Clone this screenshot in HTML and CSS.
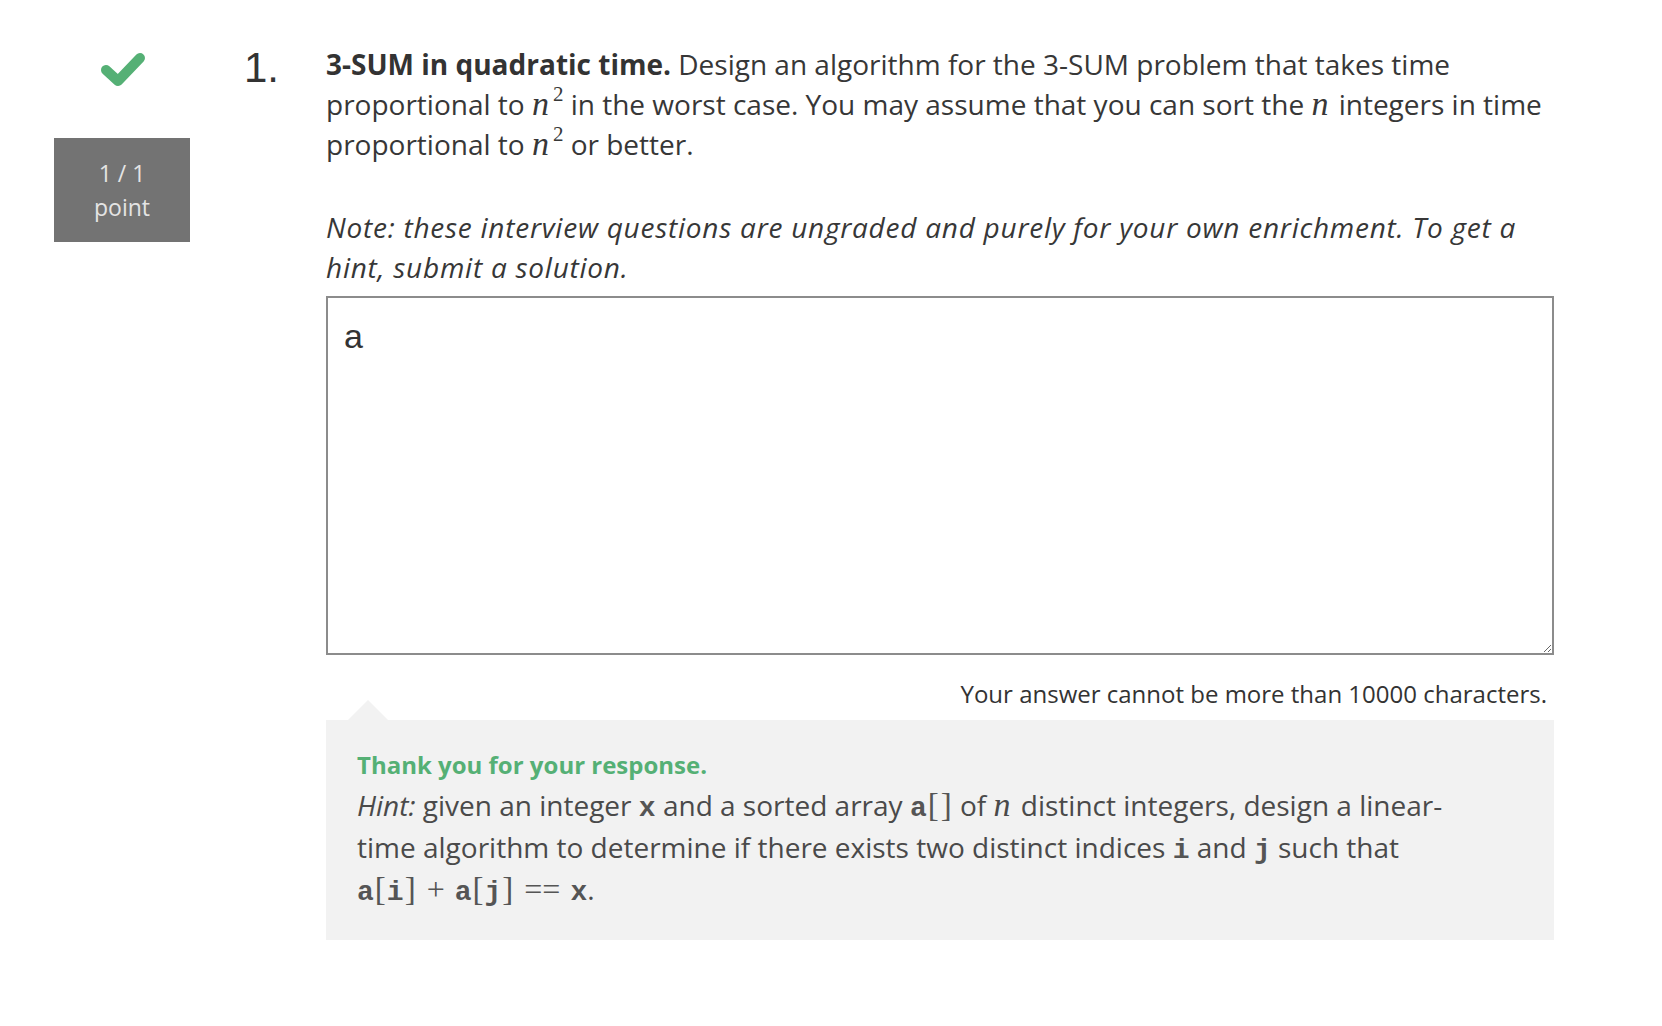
FILE: index.html
```html
<!DOCTYPE html>
<html lang="en">
<head>
<meta charset="utf-8">
<title>3-SUM in quadratic time</title>
<link rel="stylesheet" href="styles.css">
</head>
<body>
<div class="question">
  <div class="status">
    <svg class="check" viewBox="0 0 44 36" width="44" height="36" aria-hidden="true">
      <polyline points="5,19 17,30 39,7" fill="none" stroke="#55b075" stroke-width="10" stroke-linecap="round" stroke-linejoin="round"/>
    </svg>
    <div class="points">1 / 1<br>point</div>
  </div>
  <div class="qnum">1.</div>
  <div class="qbody">
    <p class="prompt"><strong>3-SUM in quadratic time.</strong> Design an algorithm for the 3-SUM problem that takes time proportional to <span class="math"><span class="mi">n</span><sup class="sup">2</sup></span> in the worst case. You may assume that you can sort the <span class="math"><span class="mi">n</span></span> integers in time proportional to <span class="math"><span class="mi">n</span><sup class="sup">2</sup></span> or better.</p>
    <p class="note">Note: these interview questions are ungraded and purely for your own enrichment. To get a hint, submit a solution.</p>
    <textarea class="answer">a</textarea>
    <div class="limit">Your answer cannot be more than 10000 characters.</div>
    <div class="feedback">
      <div class="fb-title">Thank you for your response.</div>
      <div class="fb-hint"><em>Hint:</em> given an integer <span class="tt">x</span> and a sorted array <span class="tt">a</span><span class="br">[</span><span class="br">]</span> of <span class="math"><span class="mi">n</span></span> distinct integers, design a linear-time algorithm to determine if there exists two distinct indices <span class="tt">i</span> and <span class="tt">j</span> such that <span class="tt">a</span><span class="br">[</span><span class="tt">i</span><span class="br">]</span><span class="op">+</span><span class="tt">a</span><span class="br">[</span><span class="tt">j</span><span class="br">]</span><span class="op">==</span><span class="tt">x</span>.</div>
    </div>
  </div>
</div>
</body>
</html>
```

FILE: styles.css
```css
html, body {
  margin: 0;
  padding: 0;
  background: #ffffff;
}

body {
  font-family: "Open Sans", "Noto Sans", sans-serif;
  color: #373737;
}

.question {
  display: flex;
  align-items: flex-start;
  padding: 44px 0 40px 54px;
}

.status {
  width: 136px;
  display: flex;
  flex-direction: column;
  align-items: center;
  margin-right: 54px;
  flex-shrink: 0;
}

.check {
  display: block;
  margin-top: 7px;
  margin-left: 2px;
}

.points {
  margin-top: 51px;
  width: 136px;
  box-sizing: border-box;
  padding: 18px 0;
  background: #737373;
  color: #e4e4e4;
  font-size: 23px;
  line-height: 34px;
  text-align: center;
}

.qnum {
  width: 82px;
  flex-shrink: 0;
  font-family: "Liberation Sans", Arial, sans-serif;
  font-size: 42px;
  line-height: 48px;
  color: #333333;
}

.qbody {
  width: 1228px;
  flex-shrink: 0;
  font-size: 28px;
  line-height: 40px;
}

.prompt {
  margin: 0 0 43px 0;
}

.prompt strong {
  font-weight: 700;
  color: #333333;
}

.note {
  margin: 0 0 9px 0;
  font-style: italic;
  letter-spacing: 0.75px;
}

.math {
  font-family: "Liberation Serif", "DejaVu Serif", serif;
  white-space: nowrap;
  line-height: 0;
}

.mi {
  font-style: italic;
  font-size: 34px;
  margin-right: 3px;
}

.sup {
  font-size: 21px;
  line-height: 0;
  vertical-align: 0.66em;
  margin-left: 1px;
}

.answer {
  display: block;
  box-sizing: border-box;
  width: 100%;
  height: 359px;
  margin: 0;
  border: 2px solid #8c8c8c;
  border-radius: 0;
  padding: 19px 16px;
  font-family: "Liberation Sans", Arial, sans-serif;
  font-size: 34px;
  line-height: 1.15;
  color: #333333;
  background: #ffffff;
  resize: vertical;
  outline: none;
}

.limit {
  margin: 22px 0 9px 0;
  padding-right: 7px;
  text-align: right;
  font-size: 24px;
  line-height: 34px;
  color: #333333;
}

.feedback {
  position: relative;
  background: #f2f2f2;
  padding: 28px 30px 30px 31px;
}

.feedback::before {
  content: "";
  position: absolute;
  left: 22px;
  top: -20px;
  width: 0;
  height: 0;
  border-left: 20px solid transparent;
  border-right: 20px solid transparent;
  border-bottom: 20px solid #f2f2f2;
}

.fb-title {
  font-size: 24px;
  line-height: 34px;
  font-weight: 700;
  color: #55b075;
}

.fb-hint {
  margin-top: 2px;
  font-size: 28px;
  line-height: 42px;
  color: #4a4a4a;
  padding-right: 60px;
}

.tt {
  font-family: "Liberation Mono", "DejaVu Sans Mono", monospace;
  font-weight: 700;
  font-size: 28px;
  line-height: 0;
  color: #555555;
}

.br {
  font-family: "Liberation Serif", "DejaVu Serif", serif;
  font-size: 33px;
  line-height: 0;
  color: #555555;
  margin: 0 1px;
}

.op {
  font-family: "Liberation Serif", "DejaVu Serif", serif;
  font-size: 32px;
  line-height: 0;
  margin: 0 10px;
  color: #555555;
}
```
